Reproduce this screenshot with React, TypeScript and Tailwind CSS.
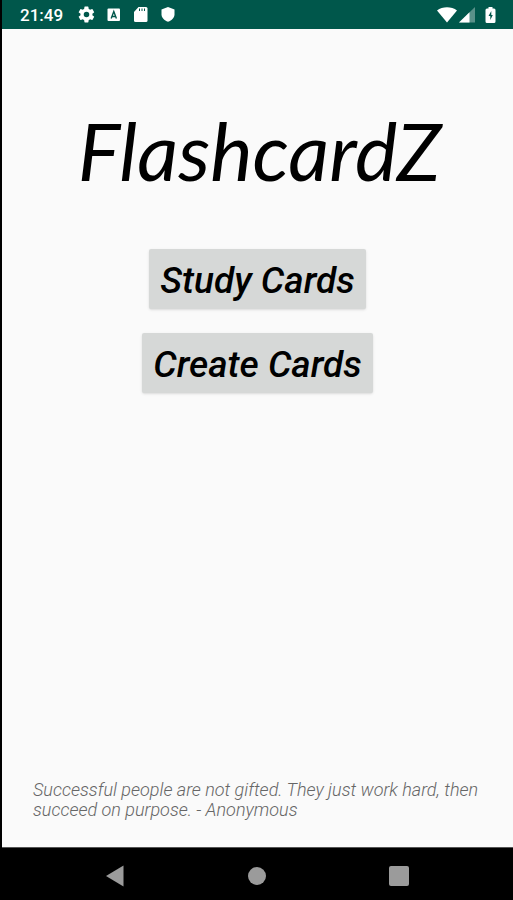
import React from 'react';

interface MenuItem {
  id: string;
  label: string;
}

const menuItems: MenuItem[] = [
  { id: 'study', label: 'Study Cards' },
  { id: 'create', label: 'Create Cards' },
];

const quote = {
  text: 'Successful people are not gifted. They just work hard, then succeed on purpose.',
  author: 'Anonymous',
};

function StatusBar() {
  return (
    <header className="flex h-[29px] items-center justify-between bg-[#00574b] pr-[17px] pl-[18px] text-white">
      <div className="flex items-center">
        <time className="w-[57px] text-[17px] leading-5 font-medium">21:49</time>
        {/* settings */}
        <svg className="mr-2 h-[19px] w-[19px]" viewBox="0 0 24 24" fill="currentColor" aria-hidden="true">
          <path d="M19.4 13c0-.3.1-.6.1-1s0-.7-.1-1l2.1-1.6c.2-.2.2-.4.1-.6l-2-3.5c-.1-.2-.4-.3-.6-.2l-2.5 1a7 7 0 0 0-1.7-1l-.4-2.6a.5.5 0 0 0-.5-.5h-4a.5.5 0 0 0-.5.5L9 5.1a7 7 0 0 0-1.7 1l-2.5-1c-.2-.1-.5 0-.6.2l-2 3.5c-.1.2-.1.4.1.6L4.5 11c0 .3-.1.6-.1 1s0 .7.1 1l-2.2 1.6c-.2.2-.2.4-.1.6l2 3.5c.1.2.4.3.6.2l2.5-1a7 7 0 0 0 1.7 1l.4 2.6c0 .3.2.5.5.5h4c.3 0 .5-.2.5-.5l.4-2.6a7 7 0 0 0 1.7-1l2.5 1c.2.1.5 0 .6-.2l2-3.5c.1-.2.1-.4-.1-.6zM12 15.5a3.500 3.500 0 1 1 0-7 3.500 3.500 0 0 1 0 7z" />
        </svg>
        {/* keyboard */}
        <svg className="mr-2 h-[19px] w-[19px]" viewBox="0 0 19 19" aria-hidden="true">
          <rect x="3.5" y="3.5" width="12.5" height="12.5" rx="1" fill="#fff" />
          <path d="M7.2 13.5 9.8 6.5l2.6 7M8 11.5h3.6" fill="none" stroke="#00574b" strokeWidth="1.4" />
        </svg>
        {/* sd card */}
        <svg className="mr-2 h-[19px] w-[19px]" viewBox="0 0 19 19" aria-hidden="true">
          <path d="M7.5 2H15a1.5 1.5 0 0 1 1.5 1.5v12A1.5 1.5 0 0 1 15 17H4.5A1.5 1.5 0 0 1 3 15.5V7z" fill="#fff" />
          <path d="M8.500 3.5v2.5M11 3.5v2.5M13.500 3.5v2.5" stroke="#00574b" strokeWidth="1" />
        </svg>
        {/* shield */}
        <svg className="h-[19px] w-[19px]" viewBox="0 0 19 19" fill="#fff" aria-hidden="true">
          <path d="m10 2 6.5 2.5v4.7c0 3.3-2.7 6.3-6.5 7.5-3.8-1.2-6.5-4.2-6.5-7.5V4.5z" />
        </svg>
      </div>

      <div className="flex items-center gap-[2px]">
        {/* wifi */}
        <svg className="h-4 w-5" viewBox="0 0 20 16" fill="#fff" aria-hidden="true">
          <path d="M0 3.5C5.5-.8 14.5-.8 20 3.5L10 15.500z" />
        </svg>
        {/* signal */}
        <svg className="mr-2 h-4 w-4" viewBox="0 0 16 16" fill="#fff" aria-hidden="true">
          <path d="M16 0v15.5H0z" opacity=".35" />
          <path d="M10.5 5.3v10.2H0z" />
        </svg>
        {/* battery */}
        <svg className="h-4 w-[11px]" viewBox="0 0 11 16" aria-hidden="true">
          <path d="M3.5 0h4v1.5H9A1.5 1.5 0 0 1 10.5 3v11.5A1.5 1.5 0 0 1 9 16H2a1.5 1.5 0 0 1-1.5-1.5V3A1.5 1.5 0 0 1 2 1.5h1.5z" fill="#fff" />
          <path d="M6.3 4 3.5 9h1.8v4l2.500-5H6.300z" fill="#00574b" />
        </svg>
      </div>
    </header>
  );
}

function NavigationBar() {
  return (
    <nav className="flex h-[53px] items-center justify-center gap-[118px] border-t border-[#555] bg-black pt-1 pr-[2px] text-[#9b9b9b]">
      <button type="button" aria-label="Back" className="flex h-6 w-6 items-center justify-center">
        <svg className="h-[22px] w-[18px]" viewBox="0 0 18 22" fill="currentColor" aria-hidden="true">
          <path d="M17.5.5v21L0 11z" />
        </svg>
      </button>
      <button type="button" aria-label="Home" className="flex h-6 w-6 items-center justify-center">
        <span className="h-[18px] w-[18px] rounded-full bg-current" />
      </button>
      <button type="button" aria-label="Recent apps" className="flex h-6 w-6 items-center justify-center">
        <span className="h-5 w-5 rounded-xs bg-current" />
      </button>
    </nav>
  );
}

export default function App() {
  return (
    <div className="flex min-h-screen flex-col border-l-2 border-black bg-[#fafafa] font-['Roboto','Liberation_Sans',sans-serif]">
      <StatusBar />

      <main className="flex flex-1 flex-col items-center">
        <h1 className="mt-[73px] pl-1 text-center font-['Lato','Open_Sans',sans-serif] text-[80px] leading-[96px] text-black italic">
          FlashcardZ
        </h1>

        <div className="mt-[51px] flex flex-col items-center gap-6">
          {menuItems.map((item) => (
            <button
              key={item.id}
              type="button"
              className="h-[60px] rounded-xs bg-[#d6d8d7] px-[11px] pt-1 text-[37px] leading-10 font-medium text-black italic shadow-sm hover:bg-[#c8cac9]"
            >
              {item.label}
            </button>
          ))}
        </div>

        <p className="mt-auto mb-[27px] w-full pr-8 pl-[31px] text-lg leading-5 font-light text-[#666] italic">
          {`${quote.text} - ${quote.author}`}
        </p>
      </main>

      <NavigationBar />
    </div>
  );
}
